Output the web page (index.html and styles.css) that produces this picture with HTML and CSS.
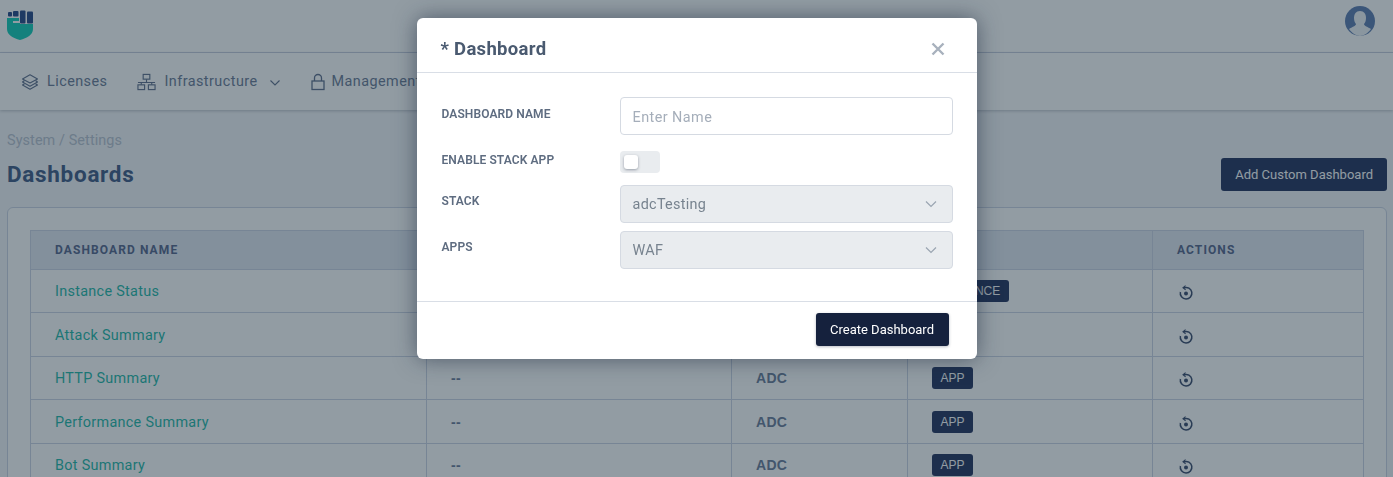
FILE: index.html
```html
<!DOCTYPE html>
<html lang="en">
<head>
  <meta charset="UTF-8">
  <meta name="viewport" content="width=device-width, initial-scale=1.0">
  <title>Dashboards</title>
  <link rel="stylesheet" href="styles.css">
</head>
<body>
  <header class="topbar">
    <svg class="logo" width="28" height="30" viewBox="0 0 28 30">
      <path d="M1 8h12v3H7v2h7v1h13v5c0 6-6 9-13 11C7 28 1 25 1 19z" fill="#11cdb7"/>
      <rect x="2" y="2" width="4" height="4.500" rx="1" fill="#244686"/>
      <rect x="7" y="1" width="5.500" height="5.500" rx="1" fill="#244686"/>
      <rect x="14" y="0.500" width="5.500" height="13" rx="1" fill="#244686"/>
      <rect x="21" y="1.500" width="6" height="12" rx="1" fill="#244686"/>
    </svg>
    <svg class="avatar" width="30" height="30" viewBox="0 0 30 30">
      <circle cx="15" cy="15" r="15" fill="#5c7cb0"/>
      <path d="M15 5c4 0 6 3 6 7 0 3-1 5-2 6 0 2 4 3 7 5-3 4-7 7-11 7s-8-3-11-7c3-2 7-3 7-5-1-1-2-3-2-6 0-4 2-7 6-7z" fill="#f0f3f7"/>
    </svg>
  </header>

  <nav class="menu">
    <a class="menu-item">
      <svg width="18" height="18" viewBox="0 0 18 18" fill="none" stroke="#5f6f8c" stroke-width="1.100" stroke-linejoin="round">
        <path d="M9 1.800 16.500 6 9 10 1.500 6z"/>
        <path d="M3.500 7.500 1.500 9 9 13.200 16.500 9l-2-1.500"/>
        <path d="M3.500 10.700 1.500 12 9 16.200 16.500 12l-2-1.300"/>
      </svg>
      Licenses
    </a>
    <a class="menu-item">
      <svg width="19" height="18" viewBox="0 0 20 18" fill="none" stroke="#5f6f8c" stroke-width="1.200">
        <rect x="6.500" y="1" width="7" height="5"/>
        <rect x="1" y="12" width="7" height="5"/>
        <rect x="12" y="12" width="7" height="5"/>
        <path d="M10 6v3M1 9.500h18M4.500 9.500V12M15.500 9.500V12"/>
      </svg>
      Infrastructure
      <svg class="menu-caret" width="12" height="8" viewBox="0 0 12 8" fill="none" stroke="#5f6f8c" stroke-width="1.100"><path d="M1.500 1.500 6 6l4.500-4.500"/></svg>
    </a>
    <a class="menu-item">
      <svg class="menu-lock" width="14" height="18" viewBox="1 0 14 18" fill="none" stroke="#5f6f8c" stroke-width="1.300">
        <rect x="2" y="8" width="12" height="8.500"/>
        <path d="M4.500 8V5a3.500 3.500 0 0 1 7 0v3"/>
      </svg>
      Management
    </a>
  </nav>

  <main class="content">
    <div class="breadcrumb">System / Settings</div>
    <div class="title-row">
      <h1>Dashboards</h1>
      <button class="btn btn-add">Add Custom Dashboard</button>
    </div>
    <section class="card">
      <table class="table">
        <thead>
          <tr>
            <th class="col-name">Dashboard Name</th>
            <th class="col-desc"></th>
            <th class="col-type"></th>
            <th class="col-scope"></th>
            <th>Actions</th>
          </tr>
        </thead>
        <tbody>
          <tr><td><a>Instance Status</a></td><td class="dim">--</td><td class="dim">ADC</td><td><span class="badge">INSTANCE</span></td><td><svg class="reset" width="16" height="16" viewBox="0 0 16 16" fill="none" stroke="#3a4a6c" stroke-width="1.500"><path d="M6 2.800A5.800 5.800 0 1 1 2.400 7"/><path d="M7.600.6 5 2.800l2.600 2" stroke-width="1.100"/><circle cx="8" cy="8.500" r="2" fill="#3a4a6c" stroke="none"/></svg></td></tr>
          <tr><td><a>Attack Summary</a></td><td class="dim">--</td><td class="dim">ADC</td><td><span class="badge">APP</span></td><td><svg class="reset" width="16" height="16" viewBox="0 0 16 16" fill="none" stroke="#3a4a6c" stroke-width="1.500"><path d="M6 2.800A5.800 5.800 0 1 1 2.400 7"/><path d="M7.600.6 5 2.800l2.600 2" stroke-width="1.100"/><circle cx="8" cy="8.500" r="2" fill="#3a4a6c" stroke="none"/></svg></td></tr>
          <tr><td><a>HTTP Summary</a></td><td class="dim">--</td><td class="dim">ADC</td><td><span class="badge">APP</span></td><td><svg class="reset" width="16" height="16" viewBox="0 0 16 16" fill="none" stroke="#3a4a6c" stroke-width="1.500"><path d="M6 2.800A5.800 5.800 0 1 1 2.400 7"/><path d="M7.600.6 5 2.800l2.600 2" stroke-width="1.100"/><circle cx="8" cy="8.500" r="2" fill="#3a4a6c" stroke="none"/></svg></td></tr>
          <tr><td><a>Performance Summary</a></td><td class="dim">--</td><td class="dim">ADC</td><td><span class="badge">APP</span></td><td><svg class="reset" width="16" height="16" viewBox="0 0 16 16" fill="none" stroke="#3a4a6c" stroke-width="1.500"><path d="M6 2.800A5.800 5.800 0 1 1 2.400 7"/><path d="M7.600.6 5 2.800l2.600 2" stroke-width="1.100"/><circle cx="8" cy="8.500" r="2" fill="#3a4a6c" stroke="none"/></svg></td></tr>
          <tr><td><a>Bot Summary</a></td><td class="dim">--</td><td class="dim">ADC</td><td><span class="badge">APP</span></td><td><svg class="reset" width="16" height="16" viewBox="0 0 16 16" fill="none" stroke="#3a4a6c" stroke-width="1.500"><path d="M6 2.800A5.800 5.800 0 1 1 2.400 7"/><path d="M7.600.6 5 2.800l2.600 2" stroke-width="1.100"/><circle cx="8" cy="8.500" r="2" fill="#3a4a6c" stroke="none"/></svg></td></tr>
        </tbody>
      </table>
    </section>
  </main>

  <div class="backdrop">
    <div class="modal">
      <div class="modal-header">
        <h2>* Dashboard</h2>
        <svg class="close" width="14" height="14" viewBox="0 0 14 14" stroke="#a8b1bd" stroke-width="2.400"><path d="M1.500 1.500l11 11M12.500 1.500l-11 11"/></svg>
      </div>
      <div class="modal-body">
        <div class="form-row">
          <label>Dashboard Name</label>
          <input class="field" type="text" placeholder="Enter Name">
        </div>
        <div class="form-row form-row-toggle">
          <label>Enable Stack App</label>
          <span class="toggle"><span class="toggle-knob"></span></span>
        </div>
        <div class="form-row">
          <label>Stack</label>
          <div class="field field-select">adcTesting
            <svg width="12" height="8" viewBox="0 0 12 8" fill="none" stroke="#9aa5b1" stroke-width="1.200"><path d="M1 1.500 6 6.500l5-5"/></svg>
          </div>
        </div>
        <div class="form-row">
          <label>Apps</label>
          <div class="field field-select">WAF
            <svg width="12" height="8" viewBox="0 0 12 8" fill="none" stroke="#9aa5b1" stroke-width="1.200"><path d="M1 1.500 6 6.500l5-5"/></svg>
          </div>
        </div>
      </div>
      <div class="modal-footer">
        <button class="btn btn-create">Create Dashboard</button>
      </div>
    </div>
  </div>
</body>
</html>
```

FILE: styles.css
```css
* {
  box-sizing: border-box;
}
html, body {
  height: 100%;
}
body {
  margin: 0;
  overflow: hidden;
  background: #f4f6f9;
  color: #344563;
  font-family: Roboto, "Liberation Sans", sans-serif;
  font-size: 14.400px;
  letter-spacing: 0.300px;
}
.topbar {
  display: flex;
  justify-content: space-between;
  align-items: flex-start;
  height: 53px;
  padding: 10px 18px 0 6px;
  background: #fff;
  border-bottom: 1px solid #ccd4e4;
}
.avatar {
  margin-top: -4px;
}
.menu {
  display: flex;
  align-items: center;
  gap: 30px;
  height: 57px;
  padding: 0 21px;
  background: #fff;
  box-shadow: 0 1px 3px rgba(22, 34, 57, 0.25);
}
.menu-item {
  display: flex;
  align-items: center;
  gap: 8px;
  color: #6b7a95;
  letter-spacing: 0.450px;
  white-space: nowrap;
}
.menu-caret {
  margin-left: 3px;
  margin-top: 3px;
}
.menu-lock {
  margin-right: -1px;
}
.content {
  padding: 22px 6px 0 7px;
}
.breadcrumb {
  color: #b9c2d0;
  line-height: 18px;
  letter-spacing: 0.100px;
}
.title-row {
  display: flex;
  justify-content: space-between;
  align-items: center;
  margin-top: 8px;
}
h1 {
  margin: -2px 0 0;
  color: #3f5a85;
  font-size: 22.500px;
  font-weight: 700;
  letter-spacing: 0.700px;
}
.btn {
  border: 0;
  border-radius: 3px;
  font-family: inherit;
  font-size: 13px;
  letter-spacing: 0;
  height: 33px;
  padding: 0 14px;
}
.btn-add {
  background: #23325e;
  color: #fff;
}
.card {
  margin-top: 16px;
  padding: 22px;
  background: #fff;
  border: 1px solid #ccd4e4;
  border-radius: 6px;
}
.table {
  width: 100%;
  border-collapse: collapse;
  table-layout: fixed;
}
.table th, .table td {
  border: 1px solid #ccd4e4;
  padding: 0 24px;
  text-align: left;
  height: 43px;
}
.table tr:nth-child(even) td {
  height: 44px;
  padding-top: 1px;
}
.table th {
  height: 39px;
  background: #e2e8f2;
  color: #55648a;
  font-size: 12px;
  font-weight: 700;
  letter-spacing: 1.100px;
  text-transform: uppercase;
}
.col-name {
  width: 396px;
}
.col-desc {
  width: 305px;
}
.col-type {
  width: 176px;
}
.col-scope {
  width: 245px;
}
.table a {
  color: #1fb8a8;
}
.dim {
  color: #6b7c99;
  font-family: "Liberation Sans", sans-serif;
  font-size: 14px;
  font-weight: 700;
}
.badge {
  display: inline-block;
  padding: 3px 8.500px;
  border-radius: 3px;
  background: #23325e;
  color: #fff;
  font-family: "Liberation Sans", sans-serif;
  font-size: 12px;
  letter-spacing: 0;
  line-height: 16px;
}
.reset {
  display: block;
  margin: 3px 0 0 1px;
}
.backdrop {
  position: fixed;
  inset: 0;
  padding-top: 18px;
  display: flex;
  justify-content: center;
  align-items: flex-start;
  background: rgba(24, 44, 60, 0.47);
}
.modal {
  width: 560px;
  background: #fff;
  border-radius: 6px;
  box-shadow: 0 0 22px rgba(22, 34, 57, 0.55);
}
.modal-header {
  display: flex;
  justify-content: space-between;
  align-items: center;
  height: 55px;
  padding: 7px 32px 0 24px;
  border-bottom: 1px solid #d9dee6;
}
h2 {
  margin: 0;
  color: #4a5a70;
  font-size: 18.500px;
  font-weight: 700;
  letter-spacing: 0.300px;
}
.modal-body {
  display: flex;
  flex-direction: column;
  gap: 8px;
  padding: 24px 24px 32px;
}
.form-row {
  display: flex;
}
.form-row label {
  width: 179px;
  padding: 8px 0 0 1px;
  color: #5e6c80;
  font-size: 12px;
  font-weight: 600;
  letter-spacing: 0.100px;
  line-height: 16px;
  text-transform: uppercase;
}
.form-row:first-child label {
  padding-top: 9px;
}
.form-row-toggle {
  margin: 8px 0 4px;
}
.form-row-toggle label {
  padding-top: 1px;
}
.field {
  flex: 1;
  height: 38px;
  padding: 0 12px;
  border: 1px solid #d5dae2;
  border-radius: 4px;
  color: #4a5a70;
  font-family: inherit;
  font-size: 14.400px;
  letter-spacing: 0.300px;
}
input.field {
  padding-top: 2px;
  letter-spacing: 0.450px;
}
.field::placeholder {
  color: #a5aeba;
}
.field-select {
  display: flex;
  justify-content: space-between;
  align-items: center;
  padding-right: 15px;
  background: #e9ecef;
  color: #77838f;
}
.toggle {
  display: block;
  width: 40px;
  height: 22px;
  padding: 4px;
  background: #e9ecef;
  border-radius: 4px;
}
.toggle-knob {
  display: block;
  width: 14px;
  height: 14px;
  background: #fff;
  border-radius: 3px;
  box-shadow: 0 1px 3px rgba(22, 34, 57, 0.4);
}
.modal-footer {
  display: flex;
  justify-content: flex-end;
  padding: 11px 28px 13px;
  border-top: 1px solid #d9dee6;
}
.btn-create {
  padding: 0 14.500px;
  background: #15213d;
  color: #fff;
  box-shadow: 0 1px 3px rgba(22, 34, 57, 0.3);
}
```
